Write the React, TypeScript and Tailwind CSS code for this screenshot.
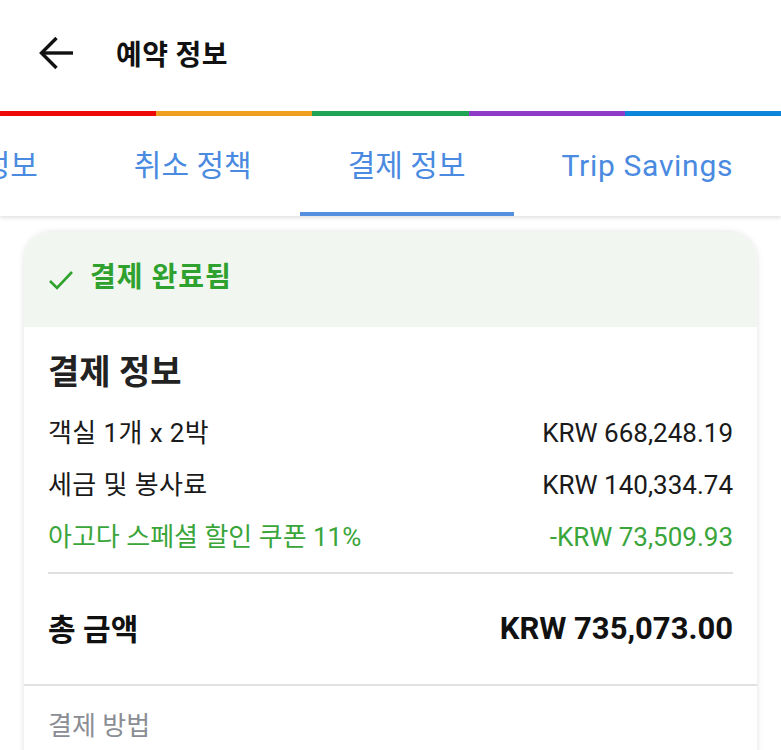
import React from "react";

const font = { fontFamily: "Roboto, 'Noto Sans CJK KR', sans-serif" };

export default function App() {
  return (
    <div className="w-[781px] h-[750px] overflow-hidden bg-white relative" style={font}>
      {/* Header */}
      <div className="h-[111px] flex items-center pb-[6px]">
        <div className="ml-[38px] w-[38px] h-[34px] flex items-center">
          <svg width="38" height="34" viewBox="0 0 38 34" fill="none" stroke="#111" strokeWidth="3.4" strokeLinecap="butt" strokeLinejoin="miter">
            <path d="M3 17H35" />
            <path d="M18.5 2L3.5 17L18.5 32" />
          </svg>
        </div>
        <div className="ml-[40px] text-[28px] font-bold text-[#111] tracking-[0.5px]" style={{ fontFamily: "'Noto Sans CJK KR', sans-serif" }}>
          예약 정보
        </div>
      </div>
      {/* Color bar */}
      <div className="flex h-[5px]">
        <div className="flex-1 bg-[#ee0a0a]" />
        <div className="flex-1 bg-[#f0a020]" />
        <div className="flex-1 bg-[#21a454]" />
        <div className="flex-1 bg-[#8e3bc9]" />
        <div className="flex-1 bg-[#0b86db]" />
      </div>
      {/* Tabs */}
      <div className="relative z-10 h-[100px] bg-white shadow-[0_2px_4px_rgba(0,0,0,0.12)] flex items-stretch overflow-hidden">
        <div className="flex -ml-[128px] shrink-0">
          {[
            ["예약 정보", false, ""],
            ["취소 정책", false, ""],
            ["결제 정보", true, ""],
            ["Trip Savings", false, "tracking-[0.7px]"],
          ].map(([label, active, extra]) => (
            <div
              key={label as string}
              className="relative shrink-0 px-[48px] flex items-center justify-center text-[30px] text-[#4a8ae0]"
            >
              <span className={`-mt-[2px] ${extra}`}>{label}</span>
              {active && <div className="absolute left-0 right-0 bottom-0 h-[4px] bg-[#5590e0]" />}
            </div>
          ))}
        </div>
      </div>
      {/* Content */}
      <div className="px-[24px] pt-[16px]">
        <div className="rounded-t-[28px] bg-white shadow-[0_0_6px_rgba(0,0,0,0.12)] overflow-hidden">
          <div className="h-[95px] bg-[#f1f7f0] flex items-center px-[24px] gap-[16px]">
            <svg width="26" height="22" viewBox="0 0 26 22" fill="none" stroke="#2ea12e" strokeWidth="2.6">
              <path d="M2 12L9 19L24 3" />
            </svg>
            <span className="text-[28px] font-bold text-[#2ea12e] mt-[-4px] tracking-[1px]">결제 완료됨</span>
          </div>
          <div className="px-[24px] pt-[22px]">
            <div className="text-[34px] font-bold text-[#222] leading-[46px]">결제 정보</div>
            <div className="mt-[20px] flex flex-col gap-[16px] text-[26px] leading-[36px]">
              <div className="flex justify-between text-[#1a1a1a]">
                <span className="tracking-[0.4px]">객실 1개 x 2박</span>
                <span>KRW 668,248.19</span>
              </div>
              <div className="flex justify-between text-[#1a1a1a]">
                <span className="tracking-[0.4px]">세금 및 봉사료</span>
                <span>KRW 140,334.74</span>
              </div>
              <div className="flex justify-between text-[#3aa53a]">
                <span>아고다 스페셜 할인 쿠폰 11%</span>
                <span>-KRW 73,509.93</span>
              </div>
            </div>
            <div className="mt-[17px] h-[2px] bg-[#e0e0e0]" />
            <div className="h-[110px] flex items-center justify-between font-bold text-[#111]">
              <span className="text-[30px]">총 금액</span>
              <span className="text-[31px]">KRW 735,073.00</span>
            </div>
          </div>
          <div className="h-[2px] bg-[#e2e2e2]" />
          <div className="px-[24px] pt-[22px] text-[26px] text-[#8a8d93] leading-[36px]">결제 방법</div>
          <div className="h-[60px]" />
        </div>
      </div>
    </div>
  );
}
